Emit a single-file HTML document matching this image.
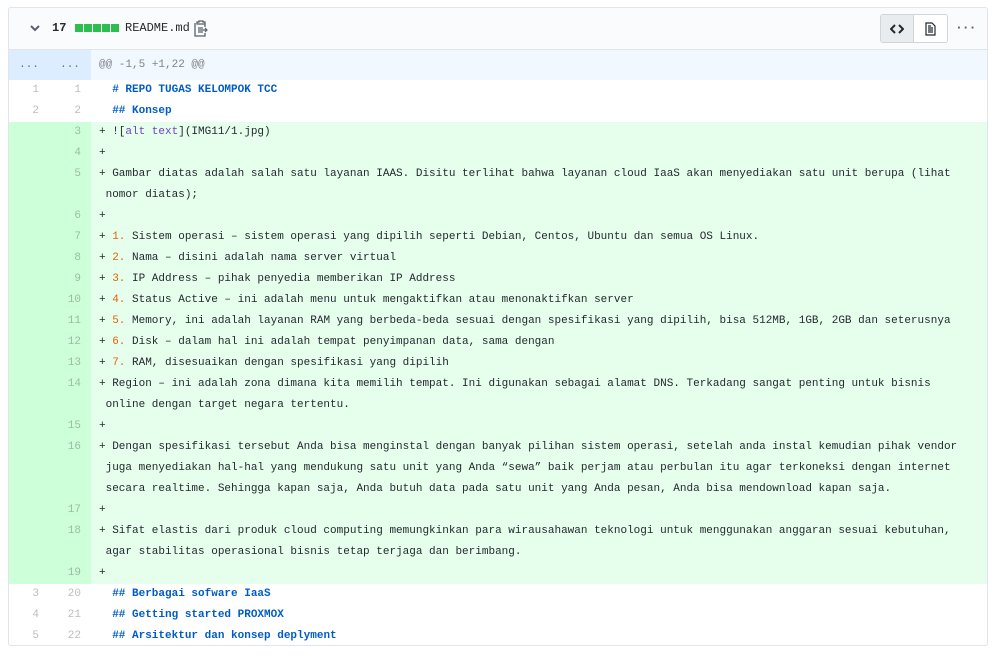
<!DOCTYPE html>
<html><head><meta charset="utf-8"><style>
*{margin:0;padding:0;box-sizing:border-box}
body{width:995px;height:656px;background:#fff;font-family:"Liberation Mono",monospace;font-size:11px;color:#24292e;overflow:hidden}
.box{position:absolute;left:8px;top:7px;width:980px;height:639px;border:1px solid #e1e4e8;border-radius:3px;overflow:hidden}
.hdr{height:42px;background:#fafbfc;border-bottom:1px solid #e1e4e8;position:relative}
.row{display:flex;line-height:21px}
.n{width:40px;text-align:right;padding-right:10px;color:rgba(27,31,35,.3)}
.n2{width:42px}
.c{flex:1;white-space:pre;padding-left:8px}
.hunk{height:30px;line-height:30px;background:#f1f8ff;color:rgba(27,31,35,.55)}
.hunk .n{background:#dbedff;color:rgba(27,31,35,.6)}
.add .n{background:#cdffd8}
.add .c{background:#e6ffed}
.add{background:#e6ffed}
.h{color:#005cc5;font-weight:bold}
.o{color:#e36209}
.p{color:#6f42c1}
</style></head><body>
<div class="box">
<div class="hdr">
<svg style="position:absolute;left:20px;top:16px" width="12" height="10" viewBox="0 0 12 10"><path d="M2 2l4 4 4-4" fill="none" stroke="#586069" stroke-width="2"/></svg>
<span style="position:absolute;left:43px;top:13px;font-size:12px;font-weight:bold;color:#24292e">17</span>
<span style="position:absolute;left:66px;top:16px;display:flex;gap:1px"><i style="width:8px;height:8px;background:#2cbe4e"></i><i style="width:8px;height:8px;background:#2cbe4e"></i><i style="width:8px;height:8px;background:#2cbe4e"></i><i style="width:8px;height:8px;background:#2cbe4e"></i><i style="width:8px;height:8px;background:#2cbe4e"></i></span>
<span style="position:absolute;left:116px;top:13px;font-size:12px">README.md</span>
<svg style="position:absolute;left:185px;top:11px" width="14" height="18" viewBox="0 0 14 18"><path d="M3 3h2V2h4v1h2v2H3z M1 4v13h10v-3 M11 8V4" fill="none" stroke="#586069" stroke-width="1.3"/><path d="M4 9h5M4 11h3M4 13h5M7 11h6M11 9l2 2-2 2" fill="none" stroke="#586069" stroke-width="1.2"/></svg>
<div style="position:absolute;left:871px;top:6px;width:68px;height:29px;border:1px solid #d1d5da;border-radius:3px;display:flex;overflow:hidden">
<div style="width:34px;background:#e9ecef;border-right:1px solid #d1d5da;display:flex;align-items:center;justify-content:center"><svg width="14" height="10" viewBox="0 0 14 10"><path d="M5 1L1 5l4 4M9 1l4 4-4 4" fill="none" stroke="#24292e" stroke-width="2"/></svg></div>
<div style="width:34px;background:#fff;display:flex;align-items:center;justify-content:center"><svg width="11" height="14" viewBox="0 0 11 14"><path d="M1 1h6l3 3v9H1z M3 6h5M3 8h5M3 10h5M3 4h3" fill="none" stroke="#24292e" stroke-width="1.2"/></svg></div>
</div>
<span style="position:absolute;left:946px;top:12px;color:#586069;font-size:13px;font-weight:bold;letter-spacing:-1px">···</span>
</div>
<div class="row hunk"><div class="n" style="text-align:center;padding:0">...</div><div class="n n2" style="text-align:center;padding:0">...</div><div class="c">@@ -1,5 +1,22 @@</div></div>
<div class="row"><div class="n">1</div><div class="n n2">1</div><div class="c">  <span class="h"># REPO TUGAS KELOMPOK TCC</span></div></div>
<div class="row"><div class="n">2</div><div class="n n2">2</div><div class="c">  <span class="h">## Konsep</span></div></div>
<div class="row add"><div class="n"></div><div class="n n2">3</div><div class="c">+ ![<span class="p">alt text</span>](IMG11/1.jpg)</div></div>
<div class="row add"><div class="n"></div><div class="n n2">4</div><div class="c">+</div></div>
<div class="row add"><div class="n"></div><div class="n n2">5</div><div class="c">+ Gambar diatas adalah salah satu layanan IAAS. Disitu terlihat bahwa layanan cloud IaaS akan menyediakan satu unit berupa (lihat
 nomor diatas);</div></div>
<div class="row add"><div class="n"></div><div class="n n2">6</div><div class="c">+</div></div>
<div class="row add"><div class="n"></div><div class="n n2">7</div><div class="c">+ <span class="o">1.</span> Sistem operasi – sistem operasi yang dipilih seperti Debian, Centos, Ubuntu dan semua OS Linux.</div></div>
<div class="row add"><div class="n"></div><div class="n n2">8</div><div class="c">+ <span class="o">2.</span> Nama – disini adalah nama server virtual</div></div>
<div class="row add"><div class="n"></div><div class="n n2">9</div><div class="c">+ <span class="o">3.</span> IP Address – pihak penyedia memberikan IP Address</div></div>
<div class="row add"><div class="n"></div><div class="n n2">10</div><div class="c">+ <span class="o">4.</span> Status Active – ini adalah menu untuk mengaktifkan atau menonaktifkan server</div></div>
<div class="row add"><div class="n"></div><div class="n n2">11</div><div class="c">+ <span class="o">5.</span> Memory, ini adalah layanan RAM yang berbeda-beda sesuai dengan spesifikasi yang dipilih, bisa 512MB, 1GB, 2GB dan seterusnya</div></div>
<div class="row add"><div class="n"></div><div class="n n2">12</div><div class="c">+ <span class="o">6.</span> Disk – dalam hal ini adalah tempat penyimpanan data, sama dengan</div></div>
<div class="row add"><div class="n"></div><div class="n n2">13</div><div class="c">+ <span class="o">7.</span> RAM, disesuaikan dengan spesifikasi yang dipilih</div></div>
<div class="row add"><div class="n"></div><div class="n n2">14</div><div class="c">+ Region – ini adalah zona dimana kita memilih tempat. Ini digunakan sebagai alamat DNS. Terkadang sangat penting untuk bisnis
 online dengan target negara tertentu.</div></div>
<div class="row add"><div class="n"></div><div class="n n2">15</div><div class="c">+</div></div>
<div class="row add"><div class="n"></div><div class="n n2">16</div><div class="c">+ Dengan spesifikasi tersebut Anda bisa menginstal dengan banyak pilihan sistem operasi, setelah anda instal kemudian pihak vendor
 juga menyediakan hal-hal yang mendukung satu unit yang Anda “sewa” baik perjam atau perbulan itu agar terkoneksi dengan internet
 secara realtime. Sehingga kapan saja, Anda butuh data pada satu unit yang Anda pesan, Anda bisa mendownload kapan saja.</div></div>
<div class="row add"><div class="n"></div><div class="n n2">17</div><div class="c">+</div></div>
<div class="row add"><div class="n"></div><div class="n n2">18</div><div class="c">+ Sifat elastis dari produk cloud computing memungkinkan para wirausahawan teknologi untuk menggunakan anggaran sesuai kebutuhan,
 agar stabilitas operasional bisnis tetap terjaga dan berimbang.</div></div>
<div class="row add"><div class="n"></div><div class="n n2">19</div><div class="c">+</div></div>
<div class="row"><div class="n">3</div><div class="n n2">20</div><div class="c">  <span class="h">## Berbagai sofware IaaS</span></div></div>
<div class="row"><div class="n">4</div><div class="n n2">21</div><div class="c">  <span class="h">## Getting started PROXMOX</span></div></div>
<div class="row"><div class="n">5</div><div class="n n2">22</div><div class="c">  <span class="h">## Arsitektur dan konsep deplyment</span></div></div>
</div>
</body></html>
